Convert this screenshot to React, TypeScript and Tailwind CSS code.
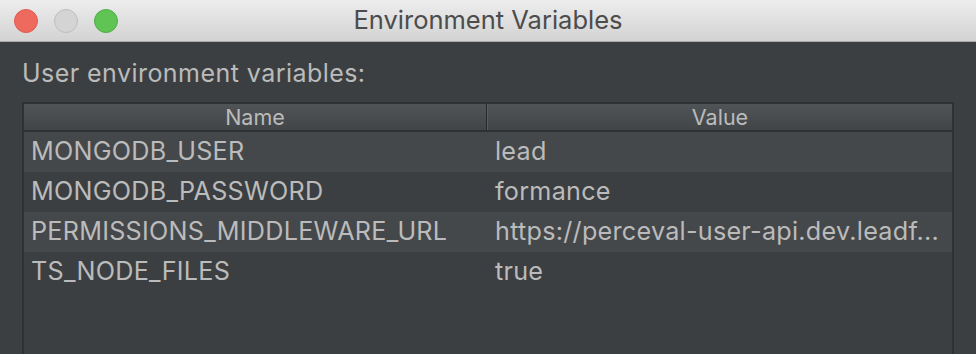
import React from "react";

const rows = [
  ["MONGODB_USER", "lead"],
  ["MONGODB_PASSWORD", "formance"],
  ["PERMISSIONS_MIDDLEWARE_URL", "https://perceval-user-api.dev.leadf..."],
  ["TS_NODE_FILES", "true"],
];

export default function App() {
  return (
    <div
      className="w-[976px] h-[354px] overflow-hidden bg-[#3c3f41] flex flex-col"
      style={{ fontFamily: "Inter, 'Liberation Sans', sans-serif" }}
    >
      <div className="relative h-[42px] shrink-0 bg-gradient-to-b from-[#ededed] to-[#d3d3d3] border-b border-[#a9a9a9] flex items-center">
        <div className="flex items-center gap-[16px] pl-[14px]">
          <div className="w-[24px] h-[24px] rounded-full bg-[#ef6a5e] border border-[#de5b4f]" />
          <div className="w-[24px] h-[24px] rounded-full bg-[#d4d4d4] border border-[#bfbfbf]" />
          <div className="w-[24px] h-[24px] rounded-full bg-[#5fc454] border border-[#51ad47]" />
        </div>
        <div className="absolute inset-0 flex items-center justify-center text-[25.5px] text-[#4c4c4c]">
          Environment Variables
        </div>
      </div>
      <div className="flex-1 px-[22px] flex flex-col">
        <div className="mt-[15px] h-[32px] leading-[32px] text-[25px] tracking-[0.45px] text-[#bbbbbb]">
          User environment variables:
        </div>
        <div className="mt-[13px] flex-1 border-2 border-b-0 border-[#2e3032] bg-[#3c3f41] flex flex-col">
          <div className="h-[28px] shrink-0 flex bg-gradient-to-b from-[#515457] to-[#424548] border-b-2 border-[#2e3032] text-[21.5px] text-[#bbbbbb] leading-[26px]">
            <div className="w-[462px] text-center">Name</div>
            <div className="w-[1px] bg-[#26282a]" />
            <div className="w-[1px] bg-[#5a5d60]" />
            <div className="flex-1 text-center">Value</div>
          </div>
          {rows.map(([n, v], i) => (
            <div
              key={n}
              className={`h-[40px] flex items-center text-[25.2px] tracking-[0.25px] text-[#bbbbbb] ${
                i % 2 === 0 ? "bg-[#45484a]" : "bg-[#3c3f41]"
              }`}
            >
              <div className="w-[464px] pl-[7px] pb-[1px] whitespace-nowrap">{n}</div>
              <div className="flex-1 pl-[7px] pb-[1px] whitespace-nowrap overflow-hidden">{v}</div>
            </div>
          ))}
        </div>
      </div>
    </div>
  );
}
